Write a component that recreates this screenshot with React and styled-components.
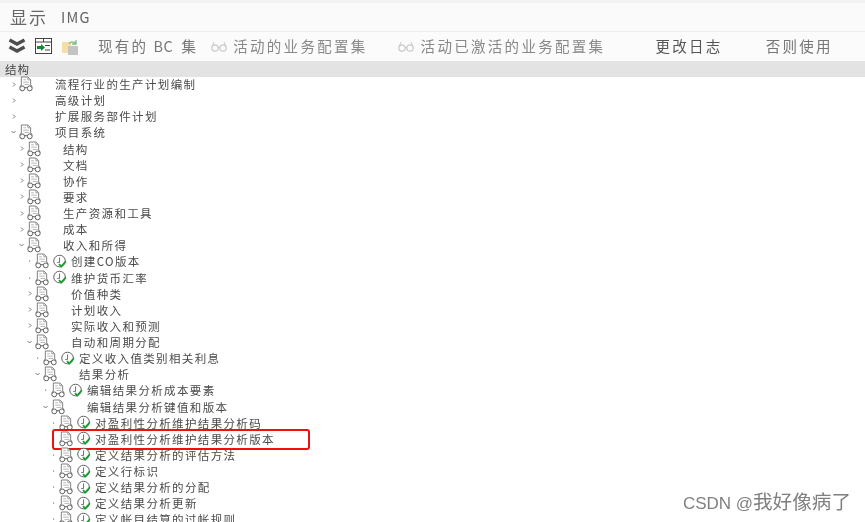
import React from "react";
import styled, { createGlobalStyle } from "styled-components";

const GlobalStyle = createGlobalStyle`
  html, body {
    margin: 0;
    padding: 0;
    background: #fff;
  }
`;

const FONT = `"Noto Sans CJK SC", "Noto Sans", sans-serif`;

const Page = styled.div`
  position: relative;
  width: 865px;
  height: 522px;
  overflow: hidden;
  display: flex;
  flex-direction: column;
  font-family: ${FONT};
  background: #fff;
  filter: blur(0.3px);
`;

const TopStrip = styled.div`
  flex: none;
  height: 3px;
  background: #f3f3f3;
`;

const TitleBar = styled.div`
  flex: none;
  height: 26px;
  padding: 0 0 2px 10px;
  display: flex;
  align-items: center;
  gap: 13px;
  background: #fafafa;
  border-bottom: 1px solid #eee;
  color: #666;
  font-size: 17px;
  letter-spacing: 2px;
`;

const TitleLatin = styled.span`
  font-size: 14.5px;
  letter-spacing: 1.2px;
`;

const Toolbar = styled.div`
  flex: none;
  height: 26px;
  padding-bottom: 2px;
  display: flex;
  align-items: center;
  background: #fbfbfb;
  font-size: 14.5px;
  letter-spacing: 2.3px;
`;

const ToolIcon = styled.svg`
  flex: none;
  margin: 2px 0 0 ${(p) => p.$left}px;
`;

const ToolText = styled.span`
  flex: none;
  margin-left: ${(p) => p.$left}px;
  color: ${(p) => p.$color};
  white-space: pre;
`;

const ToolLatin = styled.span`
  margin: 0 8px 0 5px;
  letter-spacing: 0.6px;
`;

const StructureHead = styled.div`
  flex: none;
  height: 15px;
  margin-top: 1px;
  padding: 0 0 1px 5px;
  display: flex;
  align-items: center;
  background: #e3e3e3;
  color: #444;
  font-size: 11.5px;
  letter-spacing: 1px;
`;

const Tree = styled.div`
  flex: none;
  margin-top: -1px;
`;

const Row = styled.div`
  position: relative;
  height: 16.13px;
  display: flex;
  align-items: center;
  padding-left: ${(p) => 8 + p.$level * 8}px;
  color: #4a4a4a;
  font-size: 11.5px;
  letter-spacing: 1.35px;
  white-space: nowrap;
`;

const Slot = styled.span`
  flex: none;
  width: ${(p) => p.$w}px;
  height: 16px;
  margin-right: ${(p) => p.$gap || 0}px;
  display: flex;
  align-items: center;
  justify-content: center;
`;

const Highlight = styled.div`
  position: absolute;
  left: 52px;
  top: -2px;
  width: 254px;
  height: 17px;
  border: 2px solid #f01010;
  border-radius: 3px;
`;

const Watermark = styled.div`
  position: absolute;
  right: 14px;
  bottom: 7px;
  color: #808080;
  font-size: 17px;
  font-family: "Liberation Sans", ${FONT};
`;

const WatermarkName = styled.span`
  font-size: 19.6px;
`;

const Arrow = ({ kind }) => {
  if (kind === "down") {
    return (
      <svg width="7" height="6" viewBox="0 0 7 6">
        <path d="M1.5 2l2 2 2-2" fill="none" stroke="#777" strokeWidth="1" />
      </svg>
    );
  }
  if (kind === "dot") {
    return (
      <svg width="7" height="6" viewBox="0 0 7 6">
        <rect x="3" y="2.5" width="1.2" height="1.2" fill="#888" />
      </svg>
    );
  }
  return (
    <svg width="6" height="7" viewBox="0 0 6 7">
      <path d="M2 1.5l2 2-2 2" fill="none" stroke="#777" strokeWidth="1" />
    </svg>
  );
};

const DocIcon = () => (
  <svg width="15" height="16" viewBox="0 0 15 16">
    <path d="M2.5 9V0.5h7l3 3V9" fill="#fff" stroke="#777" />
    <path d="M9.5 0.5v3h3" fill="none" stroke="#999" />
    <path d="M4.5 3.5h3M4.5 6h6M6 8.5h5" stroke="#b5b5b5" />
    <path d="M2.5 9L0.8 11.5M12.5 9l1.7 2.5" stroke="#555" fill="none" />
    <circle cx="3.5" cy="12.7" r="2.6" fill="#fff" stroke="#555" />
    <circle cx="11.5" cy="12.7" r="2.6" fill="#fff" stroke="#555" />
    <path d="M6 12h3" stroke="#555" />
  </svg>
);

const ClockIcon = () => (
  <svg width="15" height="15" viewBox="0 0 15 15">
    <circle cx="7" cy="7" r="6.2" fill="#fff" stroke="#555" />
    <path d="M7 3.2V8.5M4.5 8.5H7" fill="none" stroke="#666" />
    <path d="M6.5 10.2l2.2 2.8L13.8 7.2" fill="none" stroke="#12a02c" strokeWidth="1.9" />
  </svg>
);

const Glasses = ({ left }) => (
  <ToolIcon $left={left} width="16" height="11" viewBox="0 0 16 11">
    <circle cx="4" cy="7" r="3.2" fill="none" stroke="#c9c9c9" strokeWidth="1.2" />
    <circle cx="12" cy="7" r="3.2" fill="none" stroke="#c9c9c9" strokeWidth="1.2" />
    <path d="M7 6.5h2M1 6l2-5M15 6l-2-5" fill="none" stroke="#c9c9c9" />
  </ToolIcon>
);

// level, arrow, has doc icon, has clock, text
const rows = [
  [0, "right", 1, 0, "流程行业的生产计划编制"],
  [0, "right", 0, 0, "高级计划"],
  [0, "right", 0, 0, "扩展服务部件计划"],
  [0, "down", 1, 0, "项目系统"],
  [1, "right", 1, 0, "结构"],
  [1, "right", 1, 0, "文档"],
  [1, "right", 1, 0, "协作"],
  [1, "right", 1, 0, "要求"],
  [1, "right", 1, 0, "生产资源和工具"],
  [1, "right", 1, 0, "成本"],
  [1, "down", 1, 0, "收入和所得"],
  [2, "dot", 1, 1, "创建CO版本"],
  [2, "dot", 1, 1, "维护货币汇率"],
  [2, "right", 1, 0, "价值种类"],
  [2, "right", 1, 0, "计划收入"],
  [2, "right", 1, 0, "实际收入和预测"],
  [2, "down", 1, 0, "自动和周期分配"],
  [3, "dot", 1, 1, "定义收入值类别相关利息"],
  [3, "down", 1, 0, "结果分析"],
  [4, "dot", 1, 1, "编辑结果分析成本要素"],
  [4, "down", 1, 0, "编辑结果分析键值和版本"],
  [5, "dot", 1, 1, "对盈利性分析维护结果分析码"],
  [5, "dot", 1, 1, "对盈利性分析维护结果分析版本", true],
  [5, "dot", 1, 1, "定义结果分析的评估方法"],
  [5, "dot", 1, 1, "定义行标识"],
  [5, "dot", 1, 1, "定义结果分析的分配"],
  [5, "dot", 1, 1, "定义结果分析更新"],
  [5, "dot", 1, 1, "定义帐目结算的过帐规则"],
];

export default function App() {
  return (
    <Page>
      <GlobalStyle />
      <TopStrip />
      <TitleBar>
        <span>显示</span>
        <TitleLatin>IMG</TitleLatin>
      </TitleBar>
      <Toolbar>
        <ToolIcon $left={8} width="18" height="16" viewBox="0 0 18 16">
          <path d="M1.5 2l7.5 4 7.5-4M1.5 9l7.5 4 7.5-4" fill="none" stroke="#4e4e4e" strokeWidth="3.4" />
        </ToolIcon>
        <ToolIcon $left={9} width="17" height="16" viewBox="0 0 17 16">
          <rect x="0.5" y="0.5" width="16" height="15" fill="#fff" stroke="#444" />
          <path d="M1 4h15M8.5 1v3M10 7.5h5M10 12h5" stroke="#444" />
          <path d="M2 8h4V6l4 3.5L6 13v-2H2z" fill="#108a30" />
        </ToolIcon>
        <ToolIcon $left={10} width="17" height="17" viewBox="0 0 17 17">
          <rect x="0" y="4" width="9" height="11" fill="#f5dfa8" />
          <rect x="6" y="8" width="10" height="9" fill="#c4c4c4" />
          <path d="M7 6a4 4 0 0 1 7 0M14 2v4h-4" fill="none" stroke="#7dbb85" strokeWidth="1.3" />
        </ToolIcon>
        <ToolText $left={19} $color="#777">现有的<ToolLatin>BC</ToolLatin>集</ToolText>
        <Glasses left={13} />
        <ToolText $left={6} $color="#888">活动的业务配置集</ToolText>
        <Glasses left={30} />
        <ToolText $left={7} $color="#888">活动已激活的业务配置集</ToolText>
        <ToolText $left={50} $color="#555">更改日志</ToolText>
        <ToolText $left={43} $color="#777">否则使用</ToolText>
      </Toolbar>
      <StructureHead>结构</StructureHead>
      <Tree>
        {rows.map(([level, arrow, doc, clock, text, marked]) => (
          <Row key={text} $level={level}>
            <Slot $w={11}>
              <Arrow kind={arrow} />
            </Slot>
            <Slot $w={14} $gap={4}>
              {doc ? <DocIcon /> : null}
            </Slot>
            <Slot $w={14} $gap={4}>
              {clock ? <ClockIcon /> : null}
            </Slot>
            <span>{text}</span>
            {marked ? <Highlight /> : null}
          </Row>
        ))}
      </Tree>
      <Watermark>
        CSDN @<WatermarkName>我好像病了</WatermarkName>
      </Watermark>
    </Page>
  );
}
